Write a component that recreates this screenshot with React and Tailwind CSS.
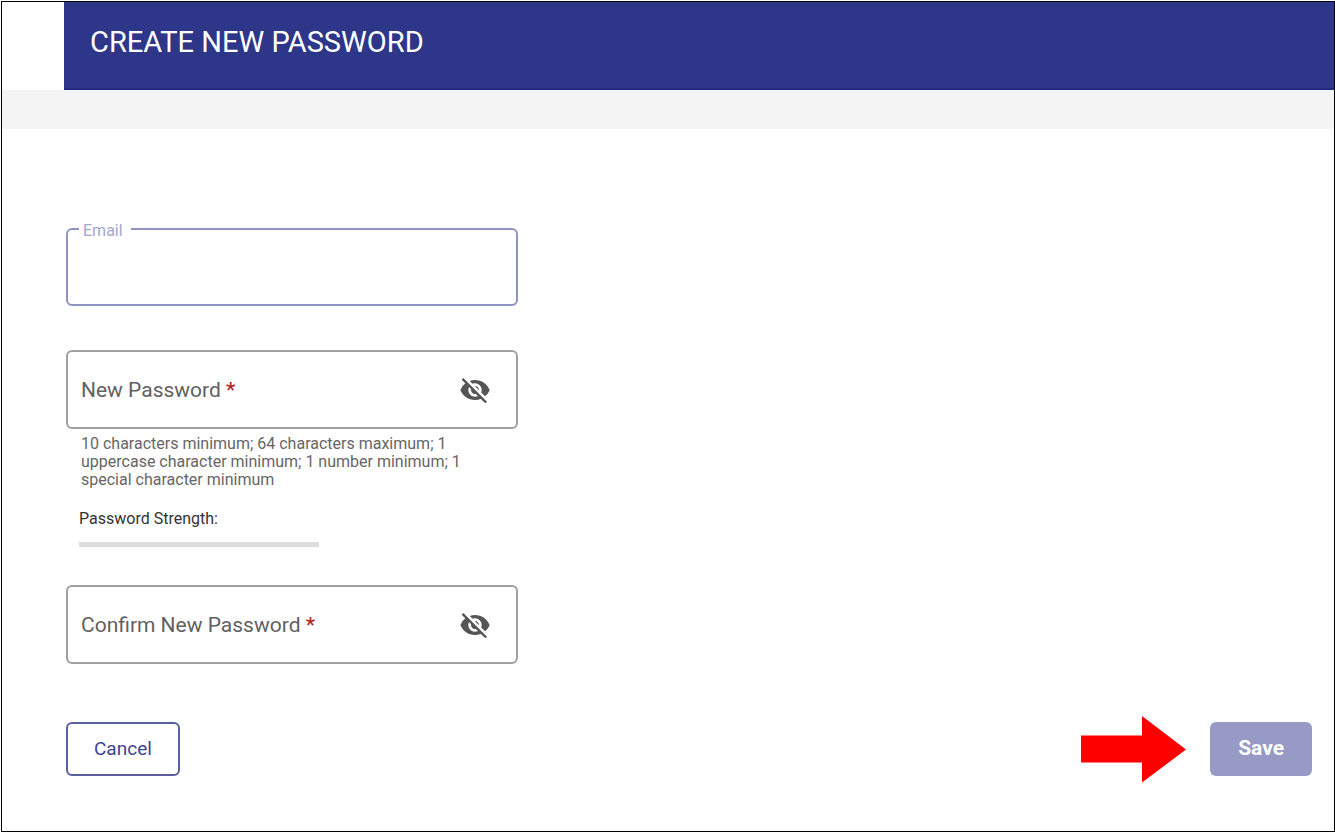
import React, { useState } from 'react';
import { MdVisibilityOff, MdVisibility } from 'react-icons/md';

const PasswordField = ({ id, label, value, onChange }) => {
  const [visible, setVisible] = useState(false);

  return (
    <div className="flex items-center h-[79px] pl-[13px] pr-[25px] border-2 border-[#a0a0a0] rounded-md">
      <label htmlFor={id} className="text-[21px] leading-7 text-[#616161] whitespace-nowrap">
        {label} <span className="font-medium text-[#b3261e]">*</span>
      </label>
      <input
        id={id}
        type={visible ? 'text' : 'password'}
        value={value}
        onChange={(e) => onChange(e.target.value)}
        className="flex-1 min-w-0 h-full px-2 text-[21px] bg-transparent focus:outline-none"
      />
      <button
        type="button"
        aria-label={visible ? 'Hide password' : 'Show password'}
        onClick={() => setVisible(!visible)}
        className="text-[#555]"
      >
        {visible ? <MdVisibility size={32} /> : <MdVisibilityOff size={32} />}
      </button>
    </div>
  );
};

const App = () => {
  const [email, setEmail] = useState('');
  const [password, setPassword] = useState('');
  const [confirm, setConfirm] = useState('');

  return (
    <div className="min-h-screen flex flex-col bg-white pt-px pl-px pb-px font-[Roboto,sans-serif]">
      <div className="flex-1 border border-black">
        <header className="flex pl-[62px]">
          <div className="flex-1 h-22 px-[26px] pt-5 bg-[#2d3689] border-b-2 border-[#232c82]">
            <h1 className="text-[29px] leading-10 text-white">CREATE NEW PASSWORD</h1>
          </div>
        </header>
        <div className="h-[39px] bg-[#f4f4f4]"></div>

        <form onSubmit={(e) => e.preventDefault()} className="pl-16 pr-[22px] pt-[90px] pb-10">
          <div className="w-full max-w-[452px]">
            {/* Email */}
            <fieldset className="h-[87px] px-[11px] border-2 border-[#8f93c0] rounded-md">
              <legend className="pt-1 pl-1 pr-2 text-base leading-4 text-[#a3a6cd]">
                <label htmlFor="email">Email</label>
              </legend>
              <input
                id="email"
                type="email"
                value={email}
                onChange={(e) => setEmail(e.target.value)}
                className="w-full h-14 px-1 text-[21px] focus:outline-none"
              />
            </fieldset>

            {/* New password */}
            <div className="mt-11">
              <PasswordField id="password" label="New Password" value={password} onChange={setPassword} />
              <p className="mt-[6px] px-[15px] text-base leading-[18px] text-[#666]">
                10 characters minimum; 64 characters maximum; 1 uppercase character minimum; 1 number
                minimum; 1 special character minimum
              </p>
            </div>

            {/* Strength */}
            <div className="mt-5 px-[13px]">
              <p className="text-base leading-5 text-[#333]">Password Strength:</p>
              <div className="mt-[13px] w-60 h-[5px] bg-[#dedede]"></div>
            </div>

            <div className="mt-[38px]">
              <PasswordField id="confirm" label="Confirm New Password" value={confirm} onChange={setConfirm} />
            </div>
          </div>

          {/* Actions */}
          <div className="mt-[51px] flex items-center justify-between">
            <button
              type="button"
              className="h-[54px] px-[26px] border-2 border-[#5a609f] rounded-md text-[19px] text-[#3d4590]"
            >
              Cancel
            </button>
            <div className="flex items-center gap-6">
              <svg width="105" height="68" viewBox="0 0 105 68" className="text-[#ff0000]" aria-hidden="true">
                <path d="M0 20.5H61V1L105 34.5L61 67.500V47.500H0Z" fill="currentColor" />
              </svg>
              <button type="submit" className="h-[54px] px-7 rounded-md bg-[#969ac4] text-[21px] font-bold text-white">
                Save
              </button>
            </div>
          </div>
        </form>
      </div>
    </div>
  );
};

export default App;
